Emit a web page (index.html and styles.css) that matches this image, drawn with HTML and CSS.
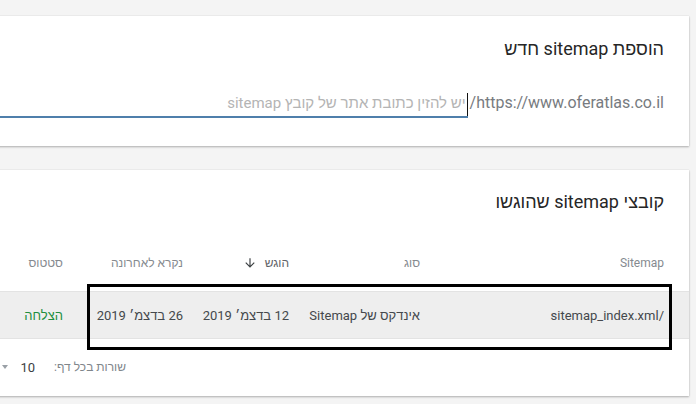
FILE: index.html
```html
<!DOCTYPE html>
<html lang="he" dir="rtl">
<head>
<meta charset="utf-8">
<title>Sitemaps</title>
<link rel="stylesheet" href="styles.css">
</head>
<body>
<div class="page">
  <section class="card add-card">
    <h2 class="card-title">הוספת sitemap חדש</h2>
    <div class="url-row">
      <span class="url-prefix">https://www.oferatlas.co.il/</span>
      <div class="url-field"><span class="caret"></span><span class="placeholder">יש להזין כתובת אתר של קובץ sitemap</span></div>
    </div>
  </section>

  <section class="card list-card">
    <h2 class="card-title">קובצי sitemap שהוגשו</h2>
    <div class="table">
      <div class="trow thead">
        <div class="cell c-name">Sitemap</div>
        <div class="cell">סוג</div>
        <div class="cell sorted">הוגש
          <svg class="sort-icon" viewBox="0 0 24 24" width="14" height="14" aria-hidden="true"><path d="M20 12l-1.41-1.41L13 16.17V4h-2v12.17l-5.58-5.59L4 12l8 8 8-8z"/></svg>
        </div>
        <div class="cell">נקרא לאחרונה</div>
        <div class="cell">סטטוס</div>
      </div>
      <div class="trow tbody-row">
        <div class="cell c-name">/sitemap_index.xml</div>
        <div class="cell">אינדקס של Sitemap</div>
        <div class="cell">12 בדצמ׳ 2019</div>
        <div class="cell">26 בדצמ׳ 2019</div>
        <div class="cell status-ok">הצלחה</div>
      </div>
    </div>
    <div class="table-footer">
      <span class="rows-label">שורות בכל דף:</span>
      <span class="rows-value">10</span>
      <span class="rows-arrow"></span>
    </div>
    <div class="highlight-box"></div>
  </section>
</div>
</body>
</html>
```

FILE: styles.css
```css
html, body {
  margin: 0;
  padding: 0;
}

body {
  background: #f4f4f4;
  font-family: Roboto, "Liberation Sans", Arial, sans-serif;
  overflow: hidden;
  width: 696px;
  height: 404px;
}

.page {
  display: flex;
  flex-direction: column;
  align-items: flex-start;
  gap: 24px;
  padding: 16px 7px 0 0;
}

.card {
  position: relative;
  width: 760px;
  background: #ffffff;
  box-shadow: 0 1px 2px rgba(0, 0, 0, 0.28), 0 0 1px rgba(0, 0, 0, 0.12);
  flex-shrink: 0;
}

.card-title {
  margin: 0;
  padding: 0 25px;
  font-size: 18px;
  font-weight: 400;
  line-height: 24px;
  color: #262626;
}

/* add card */
.add-card {
  height: 130px;
  padding-top: 21px;
  box-sizing: border-box;
}

.url-row {
  display: flex;
  align-items: flex-end;
  margin-top: 32px;
  padding-right: 25px;
}

.url-prefix {
  font-size: 16px;
  line-height: 20px;
  color: #777b80;
  padding-bottom: 5px;
  margin-left: 2px;
  white-space: nowrap;
}

.url-field {
  flex: 1;
  display: flex;
  align-items: flex-end;
  border-bottom: 2px solid #4f7fab;
  height: 25px;
  box-sizing: border-box;
}

.caret {
  width: 1px;
  height: 23px;
  background: #111;
  margin-left: 1px;
}

.placeholder {
  font-size: 15px;
  line-height: 20px;
  color: #b4b4b4;
  padding-bottom: 3px;
  white-space: nowrap;
}

/* list card */
.list-card {
  height: 226px;
  padding-top: 20px;
  box-sizing: border-box;
}

.table {
  margin-top: 21px;
}

.trow {
  display: grid;
  grid-template-columns: 269px 131px 106px 120px 1fr;
  align-items: center;
}

.cell {
  white-space: nowrap;
}

.c-name {
  padding-right: 25px;
}

.thead {
  height: 56px;
  font-size: 12px;
  color: #858a8f;
}

.sorted {
  display: flex;
  align-items: center;
  gap: 8px;
  color: #5f6368;
}

.sort-icon {
  fill: #3c4043;
}

.tbody-row {
  height: 48px;
  background: #eeeeee;
  border-top: 1px solid #e3e3e3;
  border-bottom: 1px solid #e3e3e3;
  box-sizing: border-box;
  font-size: 13px;
  color: #44484c;
}

.status-ok {
  color: #1e8e3e;
}

.table-footer {
  display: flex;
  align-items: center;
  height: 56px;
  padding-right: 563px;
  font-size: 12px;
  color: #80868b;
  white-space: nowrap;
}

.rows-label {
  flex-shrink: 0;
}

.rows-value {
  flex-shrink: 0;
  margin-right: 19px;
  font-size: 13px;
  color: #3c4043;
}

.rows-arrow {
  flex-shrink: 0;
  margin-right: 12px;
  width: 0;
  height: 0;
  border-left: 3px solid transparent;
  border-right: 3px solid transparent;
  border-top: 4px solid #9aa0a6;
}

/* annotation box drawn over the row */
.highlight-box {
  position: absolute;
  top: 114px;
  right: 17px;
  width: 585px;
  height: 66px;
  border: 3px solid #000;
  box-sizing: border-box;
}
```
